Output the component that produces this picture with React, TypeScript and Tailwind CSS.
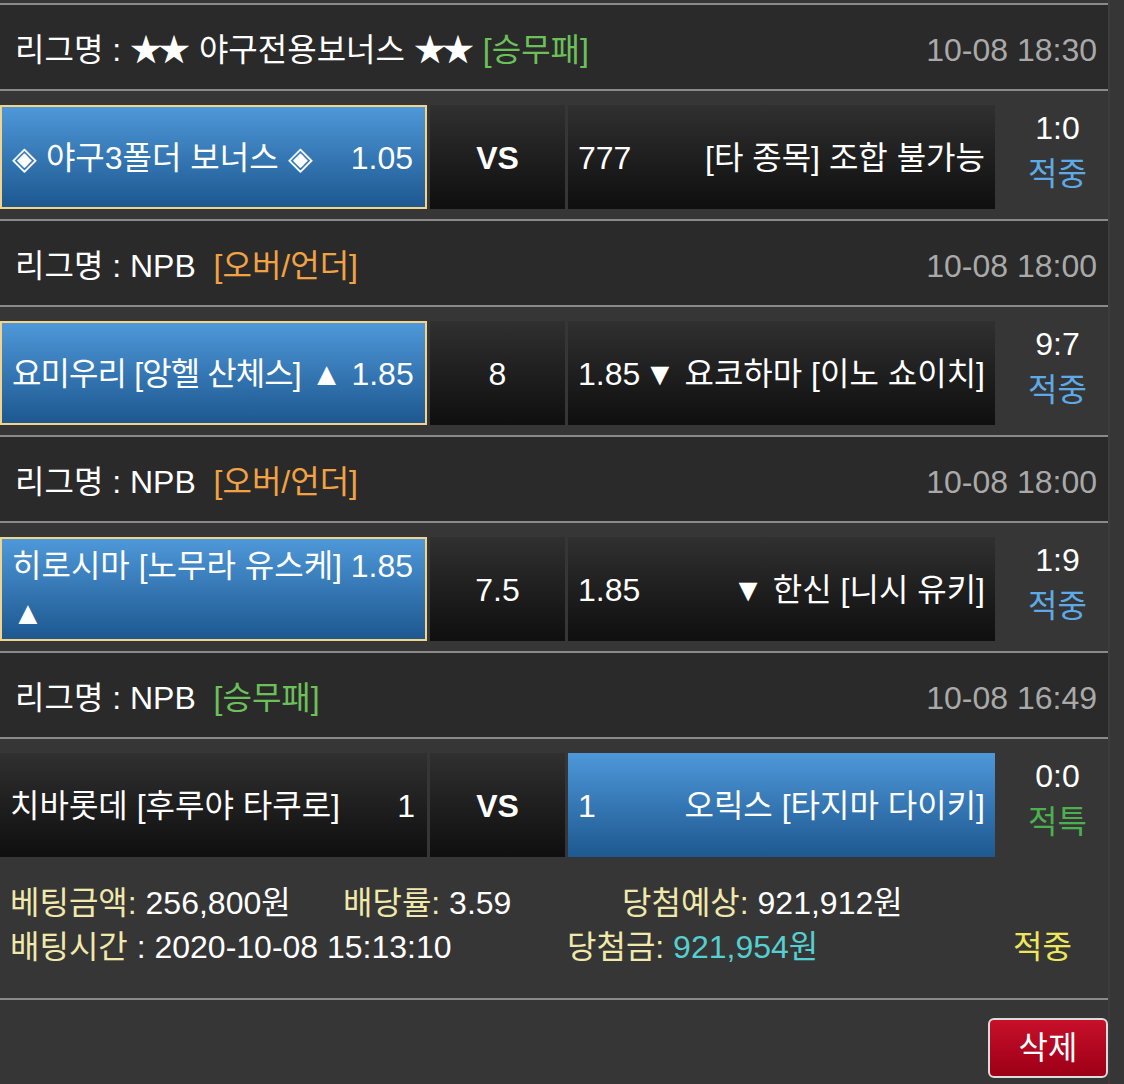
import React from "react";

const FONT =
  "font-['Liberation_Sans','Noto_Sans_CJK_KR',sans-serif] [font-feature-settings:'palt']";

const Stars = () => <span className="mr-[4px] tracking-[-4px]">★★</span>;

function Header({
  label,
  tag,
  tagClass,
  time,
}: {
  label: React.ReactNode;
  tag: string;
  tagClass: string;
  time: string;
}) {
  return (
    <div className="flex h-[86px] items-center justify-between border-t-2 border-[#8a8a8a] bg-[#2a2a2a] pl-[15px] pr-[11px] pt-[6px]">
      <div className="whitespace-pre text-white">
        리그명 : {label}
        <span className={tagClass}>{tag}</span>
      </div>
      <div className="text-[#a9a9a9]">{time}</div>
    </div>
  );
}

const blueSel =
  "border-2 border-[#f3d488] bg-gradient-to-b from-[#4e98d9] to-[#1d5890]";
const blue = "bg-gradient-to-b from-[#4e98d9] to-[#1d5890]";
const dark = "bg-gradient-to-b from-[#303030] to-[#0f0f0f]";

function MatchRow({
  left,
  leftClass,
  mid,
  midBold,
  right,
  rightClass,
  score,
  result,
  resultClass,
}: {
  left: React.ReactNode;
  leftClass: string;
  mid: string;
  midBold?: boolean;
  right: React.ReactNode;
  rightClass: string;
  score: string;
  result: string;
  resultClass: string;
}) {
  return (
    <div className="flex h-[130px] border-t-2 border-[#8a8a8a] pt-[14px]">
      <div className={`flex h-[104px] w-[427px] shrink-0 whitespace-nowrap ${leftClass}`}>{left}</div>
      <div
        className={`ml-[3px] flex h-[104px] w-[135px] shrink-0 items-center justify-center pt-[2px] ${dark} ${
          midBold ? "font-bold" : ""
        }`}
      >
        {mid}
      </div>
      <div className={`ml-[3px] flex h-[104px] w-[427px] shrink-0 whitespace-nowrap ${rightClass}`}>{right}</div>
      <div className="flex flex-1 flex-col items-center pl-[12px] leading-[46px]">
        <div className="text-white">{score}</div>
        <div className={resultClass}>{result}</div>
      </div>
    </div>
  );
}

export default function App() {
  return (
    <div className={`min-h-[1084px] w-[1124px] bg-[#363636] text-[32px] text-white ${FONT}`}>
      <div className="w-[1110px] border-r-2 border-[#3c3c3c] pt-[3px]">
        {/* Section 1 */}
        <Header
          label={
            <>
              <Stars /> 야구전용보너스 <Stars />{" "}
            </>
          }
          tag="[승무패]"
          tagClass="text-[#6cc05a]"
          time="10-08 18:30"
        />
        <MatchRow
          leftClass={blueSel}
          left={
            <div className="flex w-full items-center justify-between pl-[10px] pr-[12px] pt-[2px]">
              <span>◈ 야구3폴더 보너스 ◈</span>
              <span>1.05</span>
            </div>
          }
          mid="VS"
          midBold
          rightClass={dark}
          right={
            <div className="flex w-full items-center justify-between pl-[10px] pr-[10px] pt-[2px]">
              <span>777</span>
              <span>[타 종목] 조합 불가능</span>
            </div>
          }
          score="1:0"
          result="적중"
          resultClass="text-[#5eaae6]"
        />

        {/* Section 2 */}
        <Header label="NPB  " tag="[오버/언더]" tagClass="text-[#f2a243]" time="10-08 18:00" />
        <MatchRow
          leftClass={blueSel}
          left={
            <div className="flex w-full items-center justify-between gap-[10px] pl-[10px] pr-[12px] pt-[2px]">
              <span className="tracking-[-0.9px]">요미우리 [앙헬 산체스]</span>
              <span>▲ 1.85</span>
            </div>
          }
          mid="8"
          rightClass={dark}
          right={
            <div className="flex w-full items-center justify-between pl-[10px] pr-[10px] pt-[2px]">
              <span>1.85</span>
              <span>▼ 요코하마 [이노 쇼이치]</span>
            </div>
          }
          score="9:7"
          result="적중"
          resultClass="text-[#5eaae6]"
        />

        {/* Section 3 */}
        <Header label="NPB  " tag="[오버/언더]" tagClass="text-[#f2a243]" time="10-08 18:00" />
        <MatchRow
          leftClass={blueSel}
          left={
            <div className="flex w-full flex-col justify-center pl-[10px] pr-[12px] pt-[2px] leading-[47px]">
              <div className="flex justify-between">
                <span>히로시마 [노무라 유스케]</span>
                <span>1.85</span>
              </div>
              <div>▲</div>
            </div>
          }
          mid="7.5"
          rightClass={dark}
          right={
            <div className="flex w-full items-center justify-between pl-[10px] pr-[10px] pt-[2px]">
              <span>1.85</span>
              <span>▼ 한신 [니시 유키]</span>
            </div>
          }
          score="1:9"
          result="적중"
          resultClass="text-[#5eaae6]"
        />

        {/* Section 4 */}
        <Header label="NPB  " tag="[승무패]" tagClass="text-[#6cc05a]" time="10-08 16:49" />
        <MatchRow
          leftClass={dark}
          left={
            <div className="flex w-full items-center justify-between pl-[10px] pr-[12px] pt-[2px]">
              <span>치바롯데 [후루야 타쿠로]</span>
              <span>1</span>
            </div>
          }
          mid="VS"
          midBold
          rightClass={blue}
          right={
            <div className="flex w-full items-center justify-between pl-[10px] pr-[10px] pt-[2px]">
              <span>1</span>
              <span>오릭스 [타지마 다이키]</span>
            </div>
          }
          score="0:0"
          result="적특"
          resultClass="text-[#4db04f]"
        />

        {/* Summary */}
        <div className="h-[131px] pl-[10px] pt-[14px] leading-[44px]">
          <div className="flex">
            <div className="w-[333px]">
              <span className="text-[#f0e9ab]">베팅금액:</span> 256,800원
            </div>
            <div className="w-[279px]">
              <span className="text-[#f0e9ab]">배당률:</span> 3.59
            </div>
            <div>
              <span className="text-[#f0e9ab]">당첨예상:</span> 921,912원
            </div>
          </div>
          <div className="flex">
            <div className="w-[557px]">
              <span className="text-[#f0e9ab]">배팅시간</span> : 2020-10-08 15:13:10
            </div>
            <div className="w-[446px]">
              <span className="text-[#f0e9ab]">당첨금:</span>{" "}
              <span className="text-[#55cfcf]">921,954원</span>
            </div>
            <div className="text-[#eee75c]">적중</div>
          </div>
        </div>

        {/* Footer */}
        <div className="flex h-[86px] justify-end border-t-2 border-[#8a8a8a] pt-[18px]">
          <button className="flex h-[60px] w-[120px] items-center justify-center rounded-[6px] border-2 border-[#dcdcdc] bg-gradient-to-b from-[#c8102a] to-[#9c0016] text-[32px] text-white">
            삭제
          </button>
        </div>
      </div>
    </div>
  );
}
